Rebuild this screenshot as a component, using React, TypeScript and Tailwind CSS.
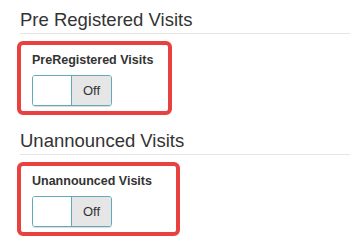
import React from "react";

function Toggle() {
  return (
    <div className="flex h-[31px] w-[80px] overflow-hidden rounded-[3px] border-[1.5px] border-[#62abb6] shadow-[0_1px_1px_rgba(0,0,0,0.15)]">
      <div className="w-[39px] bg-white border-r-[1.5px] border-[#62abb6]" />
      <div className="flex flex-1 items-center justify-center bg-[#e6e6e6] text-[13px] text-[#333]">Off</div>
    </div>
  );
}

function Section({ title, label, boxW, mt }: { title: string; label: string; boxW: string; mt: string }) {
  return (
    <div className={mt}>
      <h2 className="ml-5 border-b border-[#e5e5e5] pb-[1px] text-[18.5px] leading-[24px] text-[#333]">{title}</h2>
      <div className={`ml-[17px] mt-[7px] rounded-[6px] border-4 border-[#e8413f] pl-[11px] pt-[8px] pb-[5px] ${boxW}`}>
        <div className="text-[12.5px] font-bold leading-[15px] text-[#333]">{label}</div>
        <div className="mt-[7px]">
          <Toggle />
        </div>
      </div>
    </div>
  );
}

export default function App() {
  return (
    <div className="h-[251px] w-[350px] overflow-hidden bg-white font-['Liberation_Sans',Arial,sans-serif]">
      <Section title="Pre Registered Visits" label="PreRegistered Visits" boxW="w-[155px]" mt="pt-[8px]" />
      <Section title="Unannounced Visits" label="Unannounced Visits" boxW="w-[163px]" mt="mt-[14px]" />
    </div>
  );
}
